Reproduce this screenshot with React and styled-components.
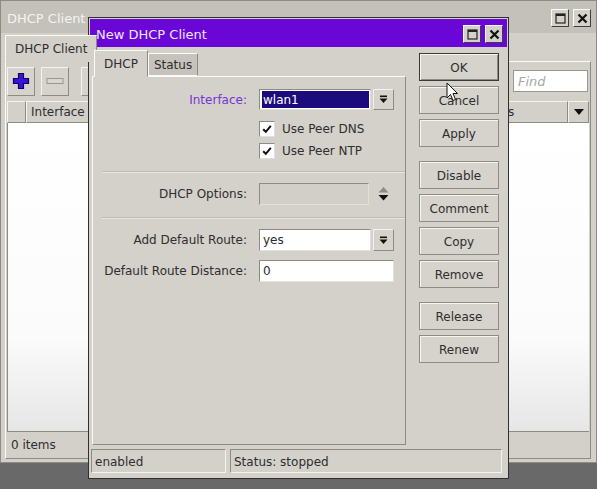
import React from 'react';
import styled, { createGlobalStyle } from 'styled-components';

const GlobalStyle = createGlobalStyle`
  html, body { margin: 0; padding: 0; }
  body {
    background: #696969;
    font-family: "DejaVu Sans", "Liberation Sans", sans-serif;
    font-size: 12px;
    color: #2e2e2e;
  }
`;

const Desktop = styled.div`
  position: relative;
  width: 597px;
  height: 489px;
  overflow: hidden;
  background: #696969;
`;

/* ---------- outer "DHCP Client" window ---------- */

const OuterWindow = styled.div`
  box-sizing: border-box;
  width: 597px;
  height: 463px;
  display: flex;
  flex-direction: column;
  background: #d3d0c9;
  border: 1px solid #8e8b85;
`;

const OuterTitle = styled.div`
  flex: none;
  height: 32px;
  display: flex;
  align-items: center;
  justify-content: space-between;
  padding: 2px 5px 0 6px;
  box-sizing: border-box;
  background: #c4c1ba;
  color: #f3f3f3;
  font-size: 13px;
`;

const TitleButtons = styled.div`
  display: flex;
  gap: ${({ gap }) => gap || 4}px;
`;

const TitleButton = styled.div`
  box-sizing: border-box;
  width: 18px;
  height: 18px;
  display: flex;
  align-items: center;
  justify-content: center;
  background: #d4d1ca;
  border: 1px solid;
  border-color: #fbfbfb #3e3e3e #3e3e3e #fbfbfb;
`;

const OuterBody = styled.div`
  flex: 1;
  display: flex;
  flex-direction: column;
  padding: 2px 5px 3px 4px;
  min-height: 0;
`;

const OuterTabs = styled.div`
  display: flex;
  height: 26px;
`;

const OuterTab = styled.div`
  display: flex;
  align-items: center;
  padding: 0 9px;
  border: 1px solid;
  border-color: #fbfbfb #8e8b85 transparent #fbfbfb;
  margin-bottom: -1px;
  background: #d3d0c9;
  z-index: 1;
`;

const OuterPanel = styled.div`
  flex: 1;
  display: flex;
  flex-direction: column;
  border: 1px solid;
  border-color: #fbfbfb #8e8b85 #8e8b85 #fbfbfb;
  padding: 4px 1px 1px 1px;
  min-height: 0;
`;

const Toolbar = styled.div`
  display: flex;
  align-items: center;
  gap: 6px;
  height: 30px;
`;

const ToolButton = styled.div`
  box-sizing: border-box;
  width: 28px;
  height: 29px;
  margin-left: ${({ spaced }) => (spaced ? 6 : 0)}px;
  display: flex;
  align-items: center;
  justify-content: center;
  border: 1px solid;
  border-color: #f4f3ef #8e8b85 #8e8b85 #f4f3ef;
  background: #d6d3cc;
`;

const FindInput = styled.div`
  box-sizing: border-box;
  margin-left: auto;
  margin-right: 1px;
  width: 75px;
  height: 22px;
  display: flex;
  align-items: center;
  padding-left: 4px;
  background: #ffffff;
  border: 1px solid #9a9790;
  color: #a8a8a8;
  font-style: italic;
  font-size: 13px;
`;

const Table = styled.div`
  flex: 1;
  margin-top: 5px;
  display: flex;
  flex-direction: column;
  min-height: 0;
`;

const TableHead = styled.div`
  display: grid;
  grid-template-columns: 19px 1fr 97px 21px;
  height: 22px;
`;

const HeadCell = styled.div`
  display: flex;
  align-items: center;
  justify-content: ${({ center }) => (center ? 'center' : 'flex-start')};
  padding-left: ${({ center }) => (center ? 0 : 4)}px;
  border: 1px solid;
  border-color: #f4f3ef #8e8b85 #8e8b85 #f4f3ef;
  background: #d3d0c9;
`;

const TableList = styled.div`
  flex: 1;
  background: linear-gradient(#ffffff, #fbfbfb 70%, #e6e6e6);
  border-left: 1px solid #8e8b85;
`;

const OuterStatus = styled.div`
  height: 25px;
  display: flex;
  align-items: center;
  padding-left: 4px;
  border-top: 1px solid #8e8b85;
`;

/* ---------- "New DHCP Client" dialog ---------- */

const Dialog = styled.div`
  position: absolute;
  left: 88px;
  top: 17px;
  box-sizing: border-box;
  width: 421px;
  height: 462px;
  padding: 1px;
  border: 1px solid #2f2f2f;
  background: #d4d1ca;
  display: flex;
  flex-direction: column;
`;

const DialogTitle = styled.div`
  flex: none;
  box-sizing: border-box;
  height: 28px;
  display: flex;
  align-items: center;
  justify-content: space-between;
  padding: 2px 4px 0 6px;
  background: #6a07d7;
  color: #efe8ff;
  font-size: 13px;
`;

const DialogMain = styled.div`
  flex: 1;
  display: flex;
  gap: 13px;
  padding-left: 2px;
  min-height: 0;
`;

const LeftColumn = styled.div`
  width: 314px;
  display: flex;
  flex-direction: column;
  padding-top: 3px;
`;

const TabStrip = styled.div`
  display: flex;
  align-items: flex-end;
  height: 26px;
  padding-left: 2px;
`;

const Tab = styled.div`
  box-sizing: border-box;
  display: flex;
  align-items: center;
  height: ${({ active }) => (active ? 27 : 23)}px;
  padding: 0 ${({ active }) => (active ? 9 : 5)}px;
  margin-bottom: ${({ active }) => (active ? -1 : 0)}px;
  background: ${({ active }) => (active ? '#d4d1ca' : '#c6c3bc')};
  border: 1px solid;
  border-color: #fbfbfb #8e8b85 ${({ active }) => (active ? 'transparent' : '#fbfbfb')} #fbfbfb;
  z-index: ${({ active }) => (active ? 1 : 0)};
`;

const Panel = styled.div`
  flex: 1;
  display: flex;
  flex-direction: column;
  border: 1px solid;
  border-color: #fbfbfb #8e8b85 #8e8b85 #fbfbfb;
  padding-left: 9px;
`;

const FormRow = styled.div`
  display: grid;
  grid-template-columns: 145px 135px;
  column-gap: 12px;
  align-items: center;
  margin-top: ${({ top }) => top}px;
  height: ${({ h }) => h || 22}px;
`;

const Label = styled.div`
  text-align: right;
  white-space: nowrap;
  color: ${({ accent }) => (accent ? '#7434d8' : '#2e2e2e')};
`;

const Field = styled.div`
  display: flex;
  align-items: center;
  gap: 2px;
  height: 100%;
`;

const Input = styled.div`
  box-sizing: border-box;
  width: ${({ full }) => (full ? '135px' : '112px')};
  height: 100%;
  display: flex;
  align-items: center;
  padding-left: ${({ selected }) => (selected ? 2 : 3)}px;
  border: 1px solid;
  border-color: #8e8b85 #e2e0da #e2e0da #8e8b85;
  background: ${({ disabled }) => (disabled ? '#d2cfc8' : '#ffffff')};
  color: #2a2a2a;
`;

const Selected = styled.span`
  display: flex;
  align-items: center;
  flex: 1;
  align-self: stretch;
  margin: 1px 1px 1px 0;
  padding-left: 1px;
  background: #1c0b7c;
  color: #ffffff;
`;

const DropButton = styled.div`
  box-sizing: border-box;
  width: 21px;
  height: 100%;
  display: flex;
  align-items: center;
  justify-content: center;
  border: 1px solid;
  border-color: #f4f3ef #8e8b85 #8e8b85 #f4f3ef;
  background: #d6d3cc;
`;

const Spinner = styled.div`
  width: 21px;
  display: flex;
  justify-content: center;
  margin-left: 2px;
`;

const CheckLine = styled.label`
  display: flex;
  align-items: center;
  gap: 7px;
  white-space: nowrap;
`;

const CheckBox = styled.span`
  box-sizing: border-box;
  width: 16px;
  height: 16px;
  display: flex;
  align-items: center;
  justify-content: center;
  background: #ffffff;
  border: 1px solid;
  border-color: #8e8b85 #e2e0da #e2e0da #8e8b85;
`;

const Separator = styled.div`
  margin-top: ${({ top }) => top}px;
  height: 0;
  border-top: 1px solid #bdbab3;
  border-bottom: 1px solid #e9e7e2;
`;

const ButtonColumn = styled.div`
  width: 80px;
  display: flex;
  flex-direction: column;
  gap: 14px;
  padding-top: 6px;
`;

const ButtonGroup = styled.div`
  display: flex;
  flex-direction: column;
  gap: 5px;
`;

const Button = styled.button`
  box-sizing: border-box;
  width: 80px;
  height: 28px;
  padding: 1px 0 0;
  font-family: inherit;
  font-size: 12px;
  color: #2e2e2e;
  background: #d6d3cc;
  border: 1px solid ${({ primary }) => (primary ? '#3a3a3a' : '#8e8b85')};
  box-shadow: inset 1px 1px 0 #f6f5f2${({ primary }) => (primary ? ', inset -1px -1px 0 #8e8b85' : '')};
`;

const StatusBar = styled.div`
  flex: none;
  display: flex;
  gap: 4px;
  height: 24px;
  margin: 4px 0 4px;
  padding: 0 5px 0 1px;
`;

const StatusCell = styled.div`
  box-sizing: border-box;
  display: flex;
  align-items: center;
  width: ${({ w }) => (w ? `${w}px` : 'auto')};
  flex: ${({ w }) => (w ? 'none' : 1)};
  padding: 2px 0 0 3px;
  border: 1px solid;
  border-color: #8e8b85 #f4f3ef #f4f3ef #8e8b85;
`;

const Cursor = styled.svg`
  position: absolute;
  left: 446px;
  top: 82px;
`;

/* ---------- icons ---------- */

const DropIcon = () => (
  <svg width="9" height="9" viewBox="0 0 9 9">
    <rect x="1" y="0.5" width="7" height="1.6" fill="#111" />
    <polygon points="0.5,3.5 8.5,3.5 4.5,8" fill="#111" />
  </svg>
);

const SpinIcon = () => (
  <svg width="11" height="16" viewBox="0 0 11 16">
    <polygon points="5.5,1 10.5,6.5 0.5,6.5" fill="#8c8c8c" />
    <polygon points="0.5,9 10.5,9 5.5,14.5" fill="#111" />
  </svg>
);

const CheckIcon = () => (
  <svg width="10" height="10" viewBox="0 0 10 10">
    <path d="M1.2 5.2 L3.8 7.8 L8.8 1.8" fill="none" stroke="#111" strokeWidth="2" />
  </svg>
);

const MaxIcon = () => (
  <svg width="11" height="11" viewBox="0 0 11 11">
    <rect x="1" y="1" width="9" height="9" fill="none" stroke="#222" strokeWidth="1.2" />
    <rect x="1" y="1" width="9" height="2" fill="#222" />
  </svg>
);

const CloseIcon = () => (
  <svg width="11" height="11" viewBox="0 0 11 11">
    <path d="M1.5 1.5 L9.5 9.5 M9.5 1.5 L1.5 9.5" stroke="#111" strokeWidth="2.2" />
  </svg>
);

const PlusIcon = () => (
  <svg width="18" height="18" viewBox="0 0 18 18">
    <path
      d="M6.5 1.5 H11.5 V6.5 H16.5 V11.5 H11.5 V16.5 H6.5 V11.5 H1.5 V6.5 H6.5 Z"
      fill="#3914d6"
      stroke="#12005a"
      strokeWidth="1.2"
    />
  </svg>
);

const MinusIcon = () => (
  <svg width="18" height="8" viewBox="0 0 18 8">
    <rect x="1" y="1.5" width="16" height="5" fill="#d8d6d0" stroke="#9a9790" />
  </svg>
);

const HeadArrow = () => (
  <svg width="10" height="6" viewBox="0 0 10 6">
    <polygon points="0,0 10,0 5,6" fill="#111" />
  </svg>
);

export default function App() {
  return (
    <Desktop>
      <GlobalStyle />

      <OuterWindow>
        <OuterTitle>
          <span>DHCP Client</span>
          <TitleButtons>
            <TitleButton><MaxIcon /></TitleButton>
            <TitleButton><CloseIcon /></TitleButton>
          </TitleButtons>
        </OuterTitle>
        <OuterBody>
          <OuterTabs>
            <OuterTab>DHCP Client</OuterTab>
          </OuterTabs>
          <OuterPanel>
            <Toolbar>
              <ToolButton><PlusIcon /></ToolButton>
              <ToolButton><MinusIcon /></ToolButton>
              <ToolButton spaced />
              <FindInput>Find</FindInput>
            </Toolbar>
            <Table>
              <TableHead>
                <HeadCell />
                <HeadCell>Interface</HeadCell>
                <HeadCell>Status</HeadCell>
                <HeadCell center><HeadArrow /></HeadCell>
              </TableHead>
              <TableList />
              <OuterStatus>0 items</OuterStatus>
            </Table>
          </OuterPanel>
        </OuterBody>
      </OuterWindow>

      <Dialog>
        <DialogTitle>
          <span>New DHCP Client</span>
          <TitleButtons gap={4}>
            <TitleButton><MaxIcon /></TitleButton>
            <TitleButton><CloseIcon /></TitleButton>
          </TitleButtons>
        </DialogTitle>

        <DialogMain>
          <LeftColumn>
            <TabStrip>
              <Tab active>DHCP</Tab>
              <Tab>Status</Tab>
            </TabStrip>
            <Panel>
              <FormRow top={12} h={21}>
                <Label accent>Interface:</Label>
                <Field>
                  <Input selected><Selected>wlan1</Selected></Input>
                  <DropButton><DropIcon /></DropButton>
                </Field>
              </FormRow>
              <FormRow top={11} h={16}>
                <span />
                <CheckLine><CheckBox><CheckIcon /></CheckBox>Use Peer DNS</CheckLine>
              </FormRow>
              <FormRow top={6} h={16}>
                <span />
                <CheckLine><CheckBox><CheckIcon /></CheckBox>Use Peer NTP</CheckLine>
              </FormRow>

              <Separator top={12} />

              <FormRow top={10}>
                <Label>DHCP Options:</Label>
                <Field>
                  <Input disabled />
                  <Spinner><SpinIcon /></Spinner>
                </Field>
              </FormRow>

              <Separator top={12} />

              <FormRow top={10}>
                <Label>Add Default Route:</Label>
                <Field>
                  <Input>yes</Input>
                  <DropButton><DropIcon /></DropButton>
                </Field>
              </FormRow>
              <FormRow top={9}>
                <Label>Default Route Distance:</Label>
                <Field>
                  <Input full>0</Input>
                </Field>
              </FormRow>
            </Panel>
          </LeftColumn>

          <ButtonColumn>
            <ButtonGroup>
              <Button primary>OK</Button>
              <Button>Cancel</Button>
              <Button>Apply</Button>
            </ButtonGroup>
            <ButtonGroup>
              <Button>Disable</Button>
              <Button>Comment</Button>
              <Button>Copy</Button>
              <Button>Remove</Button>
            </ButtonGroup>
            <ButtonGroup>
              <Button>Release</Button>
              <Button>Renew</Button>
            </ButtonGroup>
          </ButtonColumn>
        </DialogMain>

        <StatusBar>
          <StatusCell w={135}>enabled</StatusCell>
          <StatusCell>Status: stopped</StatusCell>
        </StatusBar>
      </Dialog>

      <Cursor width="13" height="20" viewBox="0 0 13 20">
        <path
          d="M1 1 L1 16 L4.5 12.5 L7 18.5 L9.5 17.5 L7 11.5 L11.5 11.5 Z"
          fill="#ffffff"
          stroke="#111"
          strokeWidth="1"
          strokeLinejoin="round"
        />
      </Cursor>
    </Desktop>
  );
}
